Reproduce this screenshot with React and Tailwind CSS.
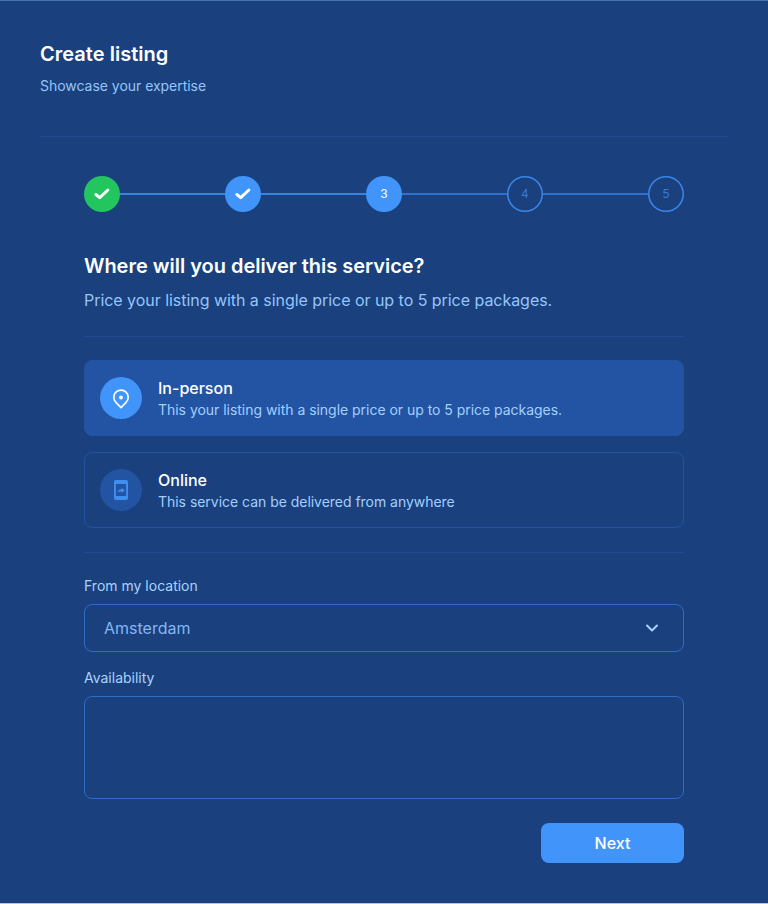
import { Fragment } from "react";

const CheckIcon = () => (
  <svg className="size-[18px]" viewBox="0 0 18 18" fill="none" stroke="white" strokeWidth="3" strokeLinecap="round" strokeLinejoin="round">
    <path d="M2.9 9.500 6.700 12.600 14.900 5" />
  </svg>
);

const PinIcon = () => (
  <svg className="size-6" viewBox="0 0 24 24" fill="none" stroke="white" strokeWidth="1.7" strokeLinejoin="round">
    <path d="M12 21.6 6.900 16.4A7.200 7.200 0 1 1 17.100 16.400Z" />
    <circle cx="12" cy="11.5" r="1.9" fill="white" stroke="none" />
  </svg>
);

const PhoneIcon = () => (
  <svg className="size-6" viewBox="0 0 24 24" fill="#3f8ff2">
    <path fillRule="evenodd" d="M7 1.9h10a2 2 0 0 1 2 2v16.2a2 2 0 0 1-2 2H7a2 2 0 0 1-2-2V3.900a2 2 0 0 1 2-2ZM6.900 6v12h10.200V6Z" />
    <path d="M8.500 14.600c.4-2 1.700-3.100 4.100-3.300V9.700l3.200 2.700-3.200 2.700v-1.600c-1.800 0-3 .3-4.100 1.100Z" />
  </svg>
);

const steps = [
  { label: "1", done: true, circle: "bg-[#22c55e]" },
  { label: "2", done: true, circle: "bg-[#4195fa]", line: "bg-[#3b82e0]" },
  { label: "3", circle: "bg-[#4195fa] text-white", line: "bg-[#3b82e0]" },
  { label: "4", circle: "shadow-[inset_0_0_0_1.5px_#3b86e8] text-[#387bd8]", line: "bg-[#316fcc]" },
  { label: "5", circle: "shadow-[inset_0_0_0_1.5px_#3b86e8] text-[#387bd8]", line: "bg-[#316fcc]" },
];

const Stepper = () => (
  <div className="flex items-center">
    {steps.map((s) => (
      <Fragment key={s.label}>
        {s.line && <div className={`h-0.5 flex-1 ${s.line}`} />}
        <div className={`flex size-9 items-center justify-center rounded-full text-xs ${s.circle}`}>
          {s.done ? <CheckIcon /> : s.label}
        </div>
      </Fragment>
    ))}
  </div>
);

const Option = ({ icon, title, text, selected }) => (
  <div className={`flex h-[76px] items-center gap-4 rounded-lg border px-[15px] ${selected ? "border-[#2354a3] bg-[#2354a3]" : "border-[#2352a0]"}`}>
    <div className={`flex size-[42px] items-center justify-center rounded-full ${selected ? "bg-[#4195fa]" : "bg-[#2354a3]"}`}>{icon}</div>
    <div>
      <div className="text-base leading-6 font-medium text-white">{title}</div>
      <div className="text-sm leading-5 tracking-[-0.03px] text-[#a2cfff]">{text}</div>
    </div>
  </div>
);

export default function App() {
  return (
    <main className="h-[904px] w-[768px] border-t border-b border-t-[#4673b1] border-b-[#adc4e5] bg-[#1a407d] font-['Inter',sans-serif]">
      <header className="mx-10 h-[136px] border-b border-[#204b94] pt-[39px]">
        <h1 className="text-xl leading-7 font-semibold tracking-[0.03px] text-white">Create listing</h1>
        <p className="mt-2 text-sm leading-5 tracking-[-0.03px] text-[#95c5fb]">Showcase your expertise</p>
      </header>
      <div className="mx-[84px] pt-[39px]">
        <Stepper />
        <section className="mt-10 h-[85px] border-b border-[#204b94]">
          <h2 className="text-xl leading-7 font-semibold tracking-[-0.02px] text-white">Where will you deliver this service?</h2>
          <p className="mt-2 text-base leading-6 tracking-[-0.04px] text-[#95c5fb]">Price your listing with a single price or up to 5 price packages.</p>
        </section>
        <section className="flex flex-col gap-4 border-b border-[#204b94] pt-[23px] pb-6">
          <Option selected icon={<PinIcon />} title="In-person" text="This your listing with a single price or up to 5 price packages." />
          <Option icon={<PhoneIcon />} title="Online" text="This service can be delivered from anywhere" />
        </section>
        <form className="flex flex-col pt-[23px]">
          <label className="text-sm leading-5 text-[#a9d3ff]">From my location</label>
          <div className="mt-2 flex h-12 items-center justify-between rounded-lg border border-[#2f6bc7] pr-[22px] pl-[19px] text-base text-[#83b6f3]">
            <span>Amsterdam</span>
            <svg className="size-[18px]" viewBox="0 0 18 18" fill="none" stroke="#a9d3ff" strokeWidth="2" strokeLinecap="round" strokeLinejoin="round">
              <path d="m4 6.500 5 5 5-5" />
            </svg>
          </div>
          <label className="mt-4 text-sm leading-5 text-[#a9d3ff]">Availability</label>
          <textarea className="mt-2 h-[103px] resize-none rounded-lg border border-[#2f6bc7] bg-transparent" />
          <button type="button" className="mt-6 h-10 w-[143px] self-end rounded-lg bg-[#4195fa] text-base font-medium text-white">Next</button>
        </form>
      </div>
    </main>
  );
}
